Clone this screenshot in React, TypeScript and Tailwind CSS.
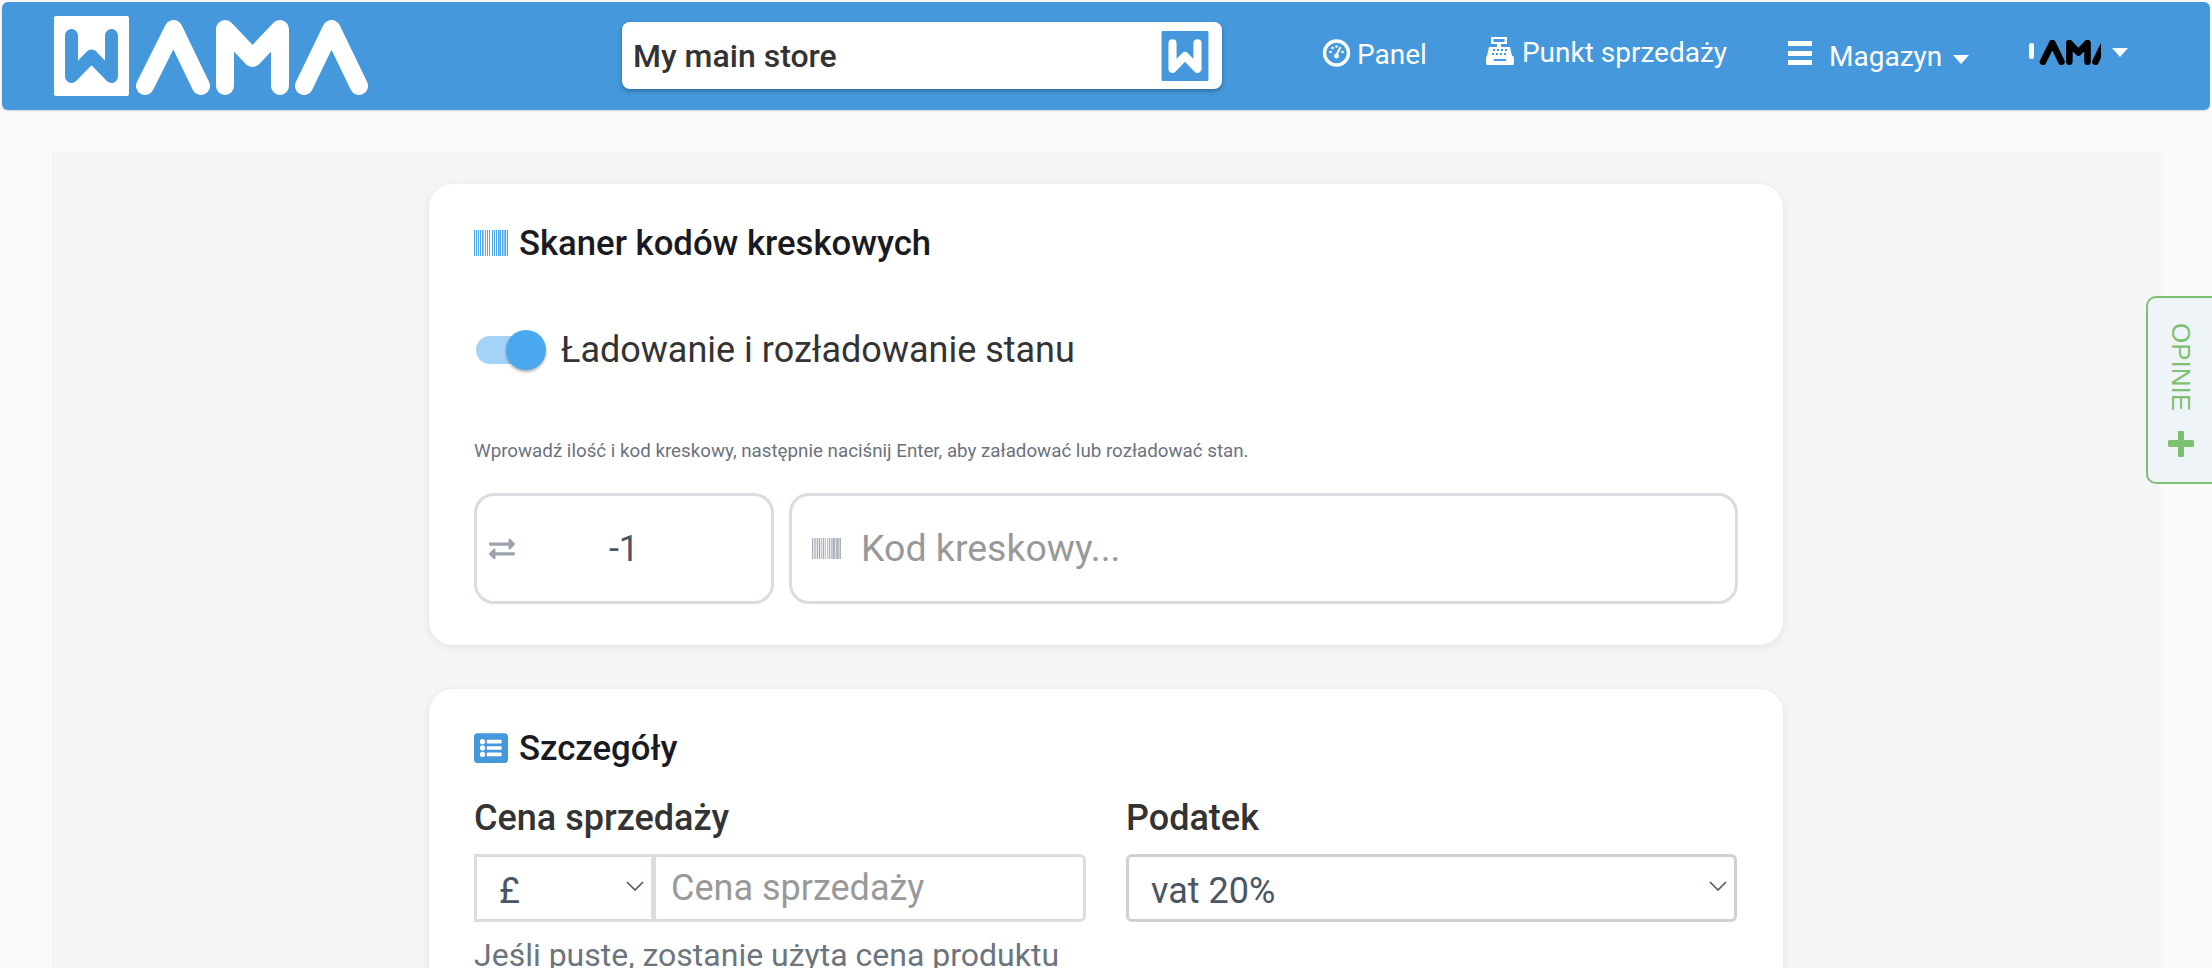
import { FaExchangeAlt, FaListAlt } from "react-icons/fa";

const F = "font-['Roboto',sans-serif]";

function Barcode({ className, color }: { className: string; color: string }) {
  const bars = [0, 2, 4, 6, 8, 11, 13, 15, 18, 20, 22, 24, 26, 28, 29.5, 31, 33];
  const w = [1, 1, 1, 1, 1.6, 1, 1, 1, 1, 1, 1, 1.6, 1.2, 1, 1.2, 1.2, 1];
  return (
    <svg viewBox="0 0 34 26" preserveAspectRatio="none" className={className}>
      {bars.map((x, i) => (
        <rect key={i} x={x} y={0} width={w[i]} height={26} fill={color} />
      ))}
    </svg>
  );
}

function WamaMark({ bg, fg, className }: { bg: string; fg: string; className: string }) {
  return (
    <svg viewBox="0 0 75 80" className={className}>
      <rect width="75" height="80" rx="2" fill={bg} />
      <path d="M17.5 19.5V60.5L37.5 40L57.5 60.5V19.5" fill="none" stroke={fg} strokeWidth="13" strokeLinecap="round" strokeLinejoin="round" />
    </svg>
  );
}

const AMA_PATH = "M145 86L173.5 29L201 86M225 86V29L252.5 58L280 29V86M304 86L331.5 29L359 86";

function AmaLetters({ color, className }: { color: string; className: string }) {
  return (
    <svg viewBox="136 20 232 75" className={className}>
      <path d={AMA_PATH} fill="none" stroke={color} strokeWidth="18" strokeLinecap="round" strokeLinejoin="round" />
    </svg>
  );
}

function SmallLogo() {
  return (
    <svg viewBox="0 0 72 25" className="w-[72px] h-[25px] blur-[0.5px]">
      <rect x="0" y="3" width="5" height="16" rx="2" fill="#ffffff" />
      <g transform="translate(11 0) scale(0.33) translate(-136 -20)">
        <path d={AMA_PATH} fill="none" stroke="#000" strokeWidth="20" strokeLinecap="round" strokeLinejoin="round" />
      </g>
    </svg>
  );
}

function Caret({ className }: { className: string }) {
  return <span className={`inline-block border-x-[8px] border-t-[9px] border-x-transparent border-t-white ${className}`} />;
}

function Chevron({ className }: { className: string }) {
  return (
    <svg viewBox="0 0 18 10" className={`w-[18px] h-[10px] ${className}`}>
      <path d="M1 1L9 9L17 1" fill="none" stroke="#4b5563" strokeWidth="1.6" />
    </svg>
  );
}

function Register({ className }: { className: string }) {
  return (
    <svg viewBox="0 0 28 28" className={className}>
      <path fillRule="evenodd" d="M5 0H21V7H15V10H11V7H5ZM7.5 2V5H18.5V2Z" fill="#fff" />
      <path d="M3 10H24L26 19H1Z" fill="#fff" />
      <rect x="0" y="19" width="28" height="9" rx="1.5" fill="#fff" />
      <g fill="#4598db">
        <rect x="7" y="12" width="2" height="2" />
        <rect x="11" y="12" width="2" height="2" />
        <rect x="15" y="12" width="2" height="2" />
        <rect x="19" y="12" width="2" height="2" />
        <rect x="6" y="16" width="2" height="2" />
        <rect x="10" y="16" width="2" height="2" />
        <rect x="14" y="16" width="2" height="2" />
        <rect x="18" y="16" width="2" height="2" />
        <rect x="8" y="22" width="12" height="2" />
      </g>
    </svg>
  );
}

export default function App() {
  return (
    <div className={`${F} relative h-[968px] overflow-hidden bg-[#fafafa]`}>
      <header className="mx-[2px] mt-[2px] h-[108px] rounded-[6px] bg-[#4598db] flex items-start shadow-[0_1px_2px_rgba(0,0,0,0.15)]">
        <div className="ml-[52px] mt-[14px] flex items-start w-[568px]">
          <WamaMark bg="#ffffff" fg="#4598db" className="w-[75px] h-[80px]" />
          <AmaLetters color="#ffffff" className="ml-[7px] mt-[4px] w-[232px] h-[75px]" />
        </div>
        <div className="mt-[20px] w-[600px] h-[67px] rounded-[8px] bg-white shadow-[0_2px_4px_rgba(0,0,0,0.3)] flex items-center justify-between pl-[11px] pr-[13px]">
          <span className="text-[32px] font-medium text-[#333]">My main store</span>
          <WamaMark bg="#4598db" fg="#ffffff" className="w-[48px] h-[50px]" />
        </div>
        <nav className="flex items-start text-white">
          <div className="ml-[100px] mt-[33px] flex items-center">
            <svg viewBox="0 0 28 28" className="w-[29px] h-[28px] mb-[4px]">
              <circle cx="14" cy="14" r="12" fill="none" stroke="#fff" strokeWidth="3.4" />
              <path d="M14 16L18 8" stroke="#fff" strokeWidth="2" />
              <circle cx="14" cy="17" r="2.4" fill="#fff" />
              <circle cx="8" cy="13" r="1.3" fill="#fff" />
              <circle cx="10" cy="9" r="1.3" fill="#fff" />
              <circle cx="14" cy="7.5" r="1.3" fill="#fff" />
              <circle cx="20" cy="13" r="1.3" fill="#fff" />
            </svg>
            <span className="ml-[6px] text-[28px] leading-[40px]">Panel</span>
          </div>
          <div className="ml-[59px] mt-[31px] flex items-center">
            <Register className="w-[28px] h-[28px] mb-[5px]" />
            <span className="ml-[8px] text-[28px] leading-[40px]">Punkt sprzedaży</span>
          </div>
          <div className="ml-[61px] mt-[35px] flex items-center">
            <div className="w-[24px] h-[24px] mb-[8px] flex flex-col justify-between">
              <div className="h-[5px] bg-white" />
              <div className="h-[5px] bg-white" />
              <div className="h-[5px] bg-white" />
            </div>
            <span className="ml-[17px] text-[28px] leading-[40px]">Magazyn</span>
            <Caret className="ml-[11px] mt-[4px]" />
          </div>
          <div className="ml-[60px] mt-[38px] flex items-start">
            <SmallLogo />
            <Caret className="ml-[11px] mt-[8px]" />
          </div>
        </nav>
      </header>

      <main className="mx-[52px] mt-[42px] w-[2109px] bg-[#f4f5f7] pt-[32px] h-[900px]">
        <section className="ml-[377px] w-[1354px] h-[461px] rounded-[24px] bg-white shadow-[0_2px_8px_rgba(0,0,0,0.08)] px-[45px] pt-[39px]">
          <h2 className="flex items-center text-[34.7px] leading-[40px] font-medium text-[#1a1a22]">
            <Barcode className="w-[34px] h-[26px] mr-[11px]" color="#4fa5e8" />
            Skaner kodów kreskowych
          </h2>
          <div className="mt-[67px] flex items-center">
            <div className="relative w-[70px] h-[40px] flex items-center">
              <div className="ml-[2px] w-[55px] h-[28px] rounded-full bg-[#a4d3f8]" />
              <div className="absolute left-[32px] top-0 w-[40px] h-[40px] rounded-full bg-[#4aa8f0] shadow-[0_2px_3px_rgba(0,0,0,0.3)]" />
            </div>
            <span className="ml-[17px] text-[36px] leading-[40px] text-[#333]">Ładowanie i rozładowanie stanu</span>
          </div>
          <p className="mt-[67px] text-[18.75px] leading-[28px] text-[#6b7280]">Wprowadź ilość i kod kreskowy, następnie naciśnij Enter, aby załadować lub rozładować stan.</p>
          <div className="mt-[28px] flex gap-[15px]">
            <div className="relative w-[300px] h-[111px] rounded-[20px] border-[3px] border-[#d9dce1] flex items-center">
              <FaExchangeAlt className="absolute left-[12px] w-[26px] h-[26px] text-[#9ca3af]" />
              <input readOnly value="-1" className="w-full text-center text-[36px] text-[#4b5563] bg-transparent outline-none" />
            </div>
            <div className="w-[949px] h-[111px] rounded-[20px] border-[3px] border-[#d9dce1] flex items-center pl-[20px]">
              <Barcode className="w-[29px] h-[21px] mr-[20px]" color="#9ca3af" />
              <input placeholder="Kod kreskowy..." className="flex-1 text-[37.5px] bg-transparent outline-none placeholder:text-[#999]" />
            </div>
          </div>
        </section>

        <section className="mt-[44px] ml-[377px] w-[1354px] h-[400px] rounded-[24px] bg-white shadow-[0_2px_8px_rgba(0,0,0,0.08)] px-[45px] pt-[39px]">
          <h2 className="flex items-center text-[34.7px] leading-[40px] font-medium text-[#1a1a22]">
            <FaListAlt className="w-[34px] h-[34px] mr-[11px] text-[#4598db]" />
            Szczegóły
          </h2>
          <div className="mt-[28px] flex gap-[40px]">
            <div className="w-[612px]">
              <div className="text-[36px] leading-[44px] font-medium text-[#333]">Cena sprzedaży</div>
              <div className="mt-[14px] flex h-[68px]">
                <div className="relative w-[180px] border-[3px] border-[#d9dce1] flex items-center pl-[22px]">
                  <span className="mt-[6px] text-[36px] text-[#4b5563]">£</span>
                  <Chevron className="absolute right-[7px] top-[24px]" />
                </div>
                <input placeholder="Cena sprzedaży" className="flex-1 min-w-0 -ml-[1px] border-[3px] border-[#d9dce1] rounded-r-[6px] pl-[15px] text-[36px] outline-none placeholder:text-[#999]" />
              </div>
              <p className="mt-[13px] text-[32px] leading-[40px] text-[#6c757d] whitespace-nowrap">Jeśli puste, zostanie użyta cena produktu</p>
            </div>
            <div className="w-[611px]">
              <div className="text-[36px] leading-[44px] font-medium text-[#333]">Podatek</div>
              <div className="relative mt-[14px] h-[68px] border-[3px] border-[#d0d0d0] rounded-[6px] flex items-center pl-[22px]">
                <span className="mt-[6px] text-[36px] text-[#4b5563]">vat 20%</span>
                <Chevron className="absolute right-[7px] top-[24px]" />
              </div>
            </div>
          </div>
        </section>
      </main>

      <aside className="absolute left-[2146px] top-[296px] w-[80px] h-[188px] rounded-l-[10px] border-2 border-[#7dc070] bg-[#eff4f9] pl-[20px] pt-[25px] text-[#7dc070]">
        <div className="font-['Liberation_Sans',sans-serif] [writing-mode:vertical-rl] text-[26px] leading-[26px]">OPINIE</div>
        <svg viewBox="0 0 26 26" className="mt-[20px] w-[26px] h-[26px]">
          <path d="M10 1.5a1 1 0 0 1 1-1.5h4a1 1 0 0 1 1 1.5V9h8.5a1.5 1.5 0 0 1 1.5 1.5v4a1.5 1.5 0 0 1-1.5 1.5H16v8.5a1.5 1.5 0 0 1-1.5 1.5h-3a1.5 1.5 0 0 1-1.5-1.5V16H1.5A1.5 1.5 0 0 1 0 14.500v-4A1.5 1.5 0 0 1 1.500 9H10Z" fill="#7dc070" />
        </svg>
      </aside>
    </div>
  );
}
